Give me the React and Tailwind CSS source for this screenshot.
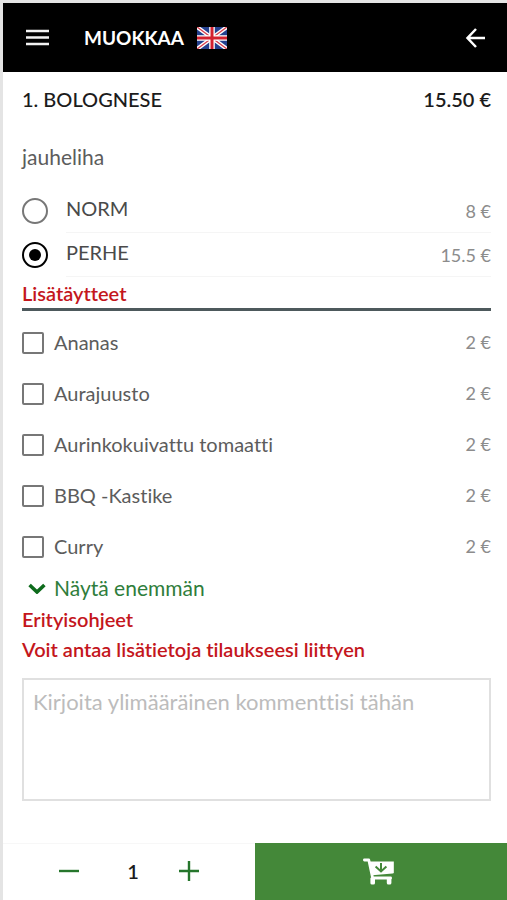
import React, { useState } from 'react'

const SIZES = [
    { id: 'norm', name: 'NORM', price: '8 €' },
    { id: 'perhe', name: 'PERHE', price: '15.5 €' },
]

const TOPPINGS = [
    { id: 'ananas', name: 'Ananas', price: '2 €' },
    { id: 'aurajuusto', name: 'Aurajuusto', price: '2 €' },
    { id: 'tomaatti', name: 'Aurinkokuivattu tomaatti', price: '2 €' },
    { id: 'bbq', name: 'BBQ -Kastike', price: '2 €' },
    { id: 'curry', name: 'Curry', price: '2 €' },
]

function FlagIcon() {
    return (
        <svg width="30" height="22" viewBox="0 0 30 22" aria-hidden="true">
            <rect width="30" height="22" fill="#24408e" />
            <path d="M0 0L30 22M30 0L0 22" stroke="#fff" strokeWidth="4" />
            <path d="M0 0L30 22M30 0L0 22" stroke="#d8414f" strokeWidth="1.4" />
            <path d="M15 0V22M0 11H30" stroke="#fff" strokeWidth="5.6" />
            <path d="M15 0V22M0 11H30" stroke="#d3202f" strokeWidth="3" />
        </svg>
    )
}

function CartIcon() {
    return (
        <svg width="32" height="28" viewBox="0 0 32 28" aria-hidden="true">
            <path d="M1.4 2H5.8L9.6 20H27.6" fill="none" stroke="#fff" strokeWidth="2.8" strokeLinecap="round" strokeLinejoin="round" />
            <path d="M6.6 3.4H30.8V14.2Q30.8 15.4 29.6 15.6L9.4 17.2Z" fill="#fff" />
            <rect x="7.4" y="19" width="4.6" height="7.6" rx="1.6" fill="#fff" />
            <rect x="23.8" y="19" width="4.6" height="7.6" rx="1.6" fill="#fff" />
            <path d="M18 5V13.2M12.6 8.4L18 13.4L23.4 8.4" fill="none" stroke="#448839" strokeWidth="2" />
        </svg>
    )
}

function Header() {
    return (
        <header className="flex h-[69px] items-center bg-black pl-[22px] pr-5 text-white">
            <button type="button" aria-label="Valikko" className="mr-[34px]">
                <svg width="25" height="18" viewBox="0 0 25 18">
                    <path d="M1 2H24M1 8.5H24M1 15H24" stroke="#f2f2f2" strokeWidth="2.4" />
                </svg>
            </button>
            <h1 className="text-[19px] font-bold">MUOKKAA</h1>
            <button type="button" aria-label="English" className="ml-[13px]">
                <FlagIcon />
            </button>
            <button type="button" aria-label="Takaisin" className="ml-auto">
                <svg width="22" height="20" viewBox="0 0 22 20" fill="none" stroke="#fff" strokeWidth="2.5">
                    <path d="M20 10H2.5M11 1L2.5 10L11 19" />
                </svg>
            </button>
        </header>
    )
}

function App() {
    const [size, setSize] = useState('perhe')
    const [selected, setSelected] = useState([])
    const [comment, setComment] = useState('')
    const [count, setCount] = useState(1)

    const toggleTopping = (id) => {
        setSelected(selected.includes(id) ? selected.filter((t) => t !== id) : [...selected, id])
    }

    return (
        <div className="flex min-h-screen flex-col border-l-[3px] border-t-[3px] border-[#e4e4e4] bg-white font-['Lato','Open_Sans',sans-serif] text-[20px] leading-7 text-[#5c5c5c] [font-variant-ligatures:none]">
            <Header />

            <main className="flex-1 pl-[19px] pr-4 pt-[13px]">
                <div className="flex justify-between font-medium text-[#1c1c1c]">
                    <h2>1. BOLOGNESE</h2>
                    <span className="font-semibold">15.50 €</span>
                </div>
                <p className="mt-[30px] text-[21px]">jauheliha</p>

                {/* Sizes */}
                <div className="mt-[18px]">
                    {SIZES.map((item) => (
                        <div key={item.id} className="flex h-11 items-center">
                            <input
                                type="radio"
                                id={item.id}
                                name="size"
                                checked={size === item.id}
                                onChange={() => setSize(item.id)}
                                className="mr-[18px] grid size-[26px] shrink-0 appearance-none place-content-center rounded-full border-2 border-[#777] checked:border-black checked:before:size-3 checked:before:rounded-full checked:before:bg-black checked:before:content-['']"
                            />
                            <label htmlFor={item.id} className="flex h-full flex-1 items-center justify-between border-b border-[#f5f5f5]">
                                <span className="pb-[6px] text-[#4a4a4a]">{item.name}</span>
                                <span className="text-[18px] text-[#8c8c8c]">{item.price}</span>
                            </label>
                        </div>
                    ))}
                </div>

                {/* Toppings */}
                <h3 className="border-b-[3px] border-[#4d595c] pt-[2px] pb-px font-semibold text-[#c4161c]">Lisätäytteet</h3>
                <div className="pt-[6px]">
                    {TOPPINGS.map((item) => (
                        <div key={item.id} className="flex h-[51px] items-center">
                            <input
                                type="checkbox"
                                id={item.id}
                                checked={selected.includes(item.id)}
                                onChange={() => toggleTopping(item.id)}
                                className="mr-[10px] size-[22px] shrink-0 appearance-none rounded-[2px] border-2 border-[#777] checked:bg-[#448839]"
                            />
                            <label htmlFor={item.id} className="flex flex-1 items-center justify-between pb-[2px]">
                                <span>{item.name}</span>
                                <span className="text-[18px] text-[#8c8c8c]">{item.price}</span>
                            </label>
                        </div>
                    ))}
                </div>
                <button type="button" className="flex h-8 items-center pl-[6px] text-[21px] text-[#2f7d3b]">
                    <svg width="18" height="12" viewBox="0 0 18 12" className="mr-2" aria-hidden="true">
                        <path d="M1.6 3L9 10L16.4 3" fill="none" stroke="#0e6b1c" strokeWidth="3.6" />
                    </svg>
                    Näytä enemmän
                </button>

                {/* Comment */}
                <h3 className="font-semibold leading-[30px] text-[#c4161c]">Erityisohjeet</h3>
                <label htmlFor="comment" className="block font-semibold leading-[31px] text-[#c4161c]">
                    Voit antaa lisätietoja tilaukseesi liittyen
                </label>
                <textarea
                    id="comment"
                    value={comment}
                    onChange={(e) => setComment(e.target.value)}
                    placeholder="Kirjoita ylimääräinen kommenttisi tähän"
                    className="mt-[13px] block h-[123px] w-full resize-none border-2 border-[#e0e0e0] px-[9px] py-2 text-[22px] placeholder:text-[#bcbcbc]"
                />
            </main>

            <footer className="sticky bottom-0 flex h-[57px] bg-white">
                <div className="flex w-1/2 items-center justify-center gap-10 border-t border-[#f7f7f7] pb-[3px]">
                    <button type="button" aria-label="Vähennä" onClick={() => setCount(Math.max(1, count - 1))}>
                        <svg width="20" height="20" viewBox="0 0 20 20">
                            <path d="M0 10H20" stroke="#26762c" strokeWidth="2.4" />
                        </svg>
                    </button>
                    <span className="pl-2 font-semibold text-[#1c1c1c]">{count}</span>
                    <button type="button" aria-label="Lisää" onClick={() => setCount(count + 1)}>
                        <svg width="20" height="20" viewBox="0 0 20 20">
                            <path d="M0 10H20M10 0V20" stroke="#26762c" strokeWidth="2.4" />
                        </svg>
                    </button>
                </div>
                <button type="button" aria-label="Lisää ostoskoriin" className="flex w-1/2 items-center justify-center bg-[#448839] pr-1">
                    <CartIcon />
                </button>
            </footer>
        </div>
    )
}

export default App
